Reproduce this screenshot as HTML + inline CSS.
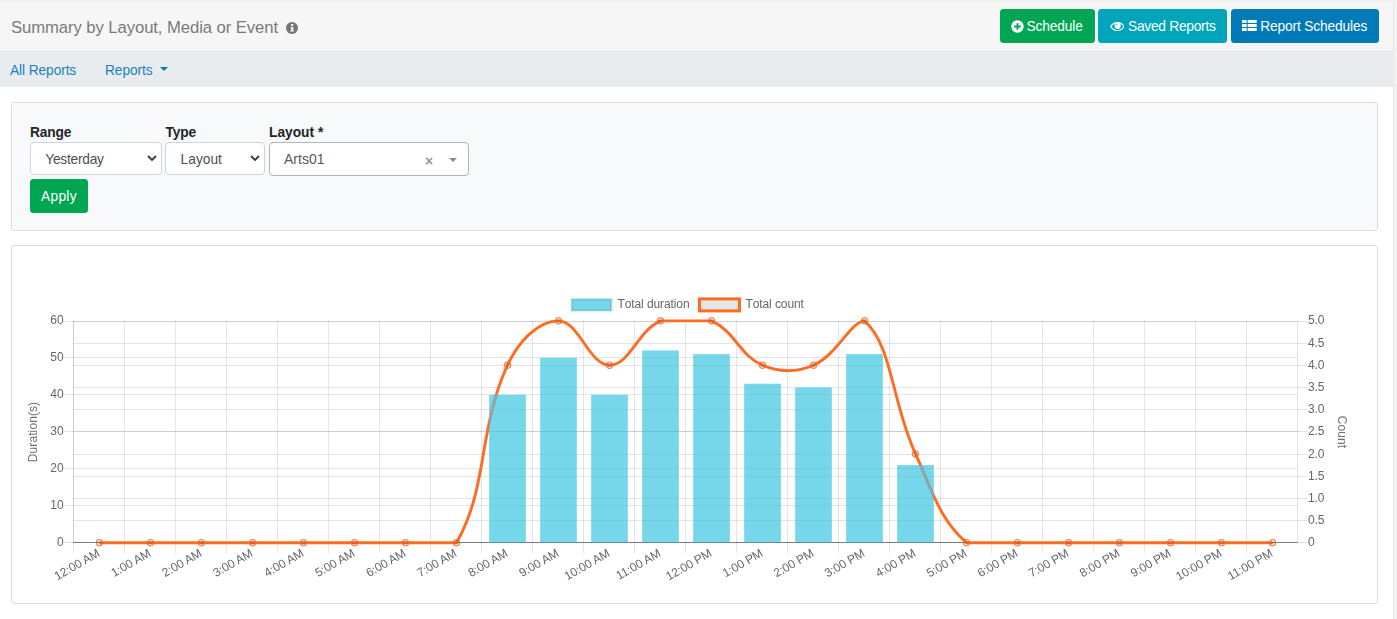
<!DOCTYPE html>
<html lang="en">
<head>
<meta charset="utf-8">
<title>Summary by Layout, Media or Event</title>
<style>
*{box-sizing:border-box}
html,body{margin:0;padding:0}
body{width:1397px;height:619px;overflow:hidden;position:relative;background:#fff;font-family:"Liberation Sans",Arial,sans-serif;font-size:13.75px;letter-spacing:-0.1px;color:#212529}
.abs{position:absolute}
.t{position:absolute;white-space:nowrap;line-height:1}
#page{position:absolute;left:0;top:0;width:1393px;height:619px;background:#fff;overflow:hidden}
#scroll{position:absolute;left:1393px;top:0;width:4px;height:619px;background:#f2f2f2;border-left:1px solid #eaeaea}
#scroll:before{content:"";position:absolute;left:-1px;top:0;width:4px;height:2px;background:#f2f2f2}
header{position:absolute;left:0;top:0;width:1393px;height:51px;background:#f6f6f6}
header:before{content:"";position:absolute;left:0;top:0;width:100%;height:1px;background:#ebebeb;border-top:1px solid #f3f3f3}
h1{margin:0;font-weight:400;font-size:16.7px;color:#7a7a7a;left:11px;top:20px;letter-spacing:-0.09px}
nav{position:absolute;left:0;top:51px;width:1393px;height:36px;background:#e9ecef;border-top:1px solid #e6e7e8}
nav a{color:#1a82bd;text-decoration:none;top:12px}
.caret{position:absolute;width:0;height:0;border-left:4px solid transparent;border-right:4px solid transparent;border-top:4.5px solid #0b7ab8}
.btn{position:absolute;height:34px;border-radius:3.5px;color:#fff;border:0;padding:0;margin:0;font:inherit;letter-spacing:inherit;text-align:left}
.btn .t{top:11px}
.btn svg{position:absolute}
.card{position:absolute;left:11px;width:1367px;border:1px solid #dcdddd;border-radius:3px}
label{font-weight:700;color:#212529;top:23px;letter-spacing:-0.15px}
.sel{position:absolute;top:39px;height:33px;background:#fff;border:1px solid #ced4da;border-radius:4px;color:#495057}
.sel .t{top:10px}
.sel svg{position:absolute;top:12px}
svg.chart{position:absolute;left:0;top:0;will-change:transform}
</style>
</head>
<body>
<div id="page">
<header>
  <h1 class="t">Summary by Layout, Media or Event</h1>
  <svg class="abs" style="left:286px;top:21.500px" width="12" height="12" viewBox="0 0 12 12"><circle cx="6" cy="6" r="6" fill="#757575"/><path d="M4.400 4.900h2.900v3.500h0.800v1.200H4.200V8.400h0.900V6.100H4.400zM5 2.100h2.200v1.800H5z" fill="#f6f6f6"/></svg>
  <a class="btn" style="left:1000px;top:9px;width:95px;background:#00a651">
    <svg style="left:11px;top:10.500px" width="13" height="13" viewBox="0 0 13 13"><circle cx="6.450" cy="6.500" r="6.200" fill="#fff"/><path d="M6.450 3.200v6.600M3.100 6.500h6.700" stroke="#00a651" stroke-width="1.900"/></svg>
    <span class="t" style="left:26.600px;letter-spacing:-0.15px">Schedule</span></a>
  <a class="btn" style="left:1098px;top:9px;width:129px;background:#00a5bb">
    <svg style="left:11.600px;top:12.800px" width="14.900" height="9.200" viewBox="0 0 15.300 9.400" preserveAspectRatio="none"><path d="M0.700 4.700C2.600 1.900 5 0.700 7.650 0.700S12.700 1.900 14.600 4.700C12.700 7.500 10.300 8.700 7.650 8.700S2.600 7.500 0.700 4.700z" fill="none" stroke="#fff" stroke-width="1.150"/><circle cx="7.800" cy="3.900" r="3.200" fill="#fff"/><path d="M5.900 3.900A1.900 1.900 0 0 1 7.800 2" stroke="#00a5bb" stroke-width="0.700" fill="none"/></svg>
    <span class="t" style="left:30px;letter-spacing:-0.26px">Saved Reports</span></a>
  <a class="btn" style="left:1231px;top:9px;width:148px;background:#007bb8">
    <svg style="left:11.300px;top:11px" width="15" height="12" viewBox="0 0 15 12"><path d="M0 0h4.700v3H0zM5.700 0h9v3h-9zM0 4h4.700v3H0zM5.700 4h9v3h-9zM0 8h4.700v3H0zM5.700 8h9v3h-9z" fill="#fff"/></svg>
    <span class="t" style="left:29.200px;letter-spacing:-0.14px">Report Schedules</span></a>
</header>
<nav>
  <a class="t" style="left:10px">All Reports</a>
  <a class="t" style="left:105px">Reports</a>
  <span class="caret" style="left:160px;top:15px"></span>
</nav>
<main>
  <section class="card" id="filter" style="top:102px;height:129px;background:#f8f9fa">
    <form onsubmit="return false">
      <label class="t" style="left:18px">Range</label>
      <label class="t" style="left:153.500px">Type</label>
      <label class="t" style="left:257px;letter-spacing:0">Layout *</label>
      <div class="sel" role="combobox" style="left:18px;width:132px"><span class="t" style="left:14.300px;letter-spacing:-0.25px">Yesterday</span>
        <svg style="left:116px" width="10" height="7" viewBox="0 0 10 7"><path d="M1 1l4 4 4-4" stroke="#343a40" stroke-width="1.800" fill="none"/></svg></div>
      <div class="sel" role="combobox" style="left:153px;width:100px"><span class="t" style="left:14.600px;letter-spacing:0px">Layout</span>
        <svg style="left:84px" width="10" height="7" viewBox="0 0 10 7"><path d="M1 1l4 4 4-4" stroke="#343a40" stroke-width="1.800" fill="none"/></svg></div>
      <div class="sel s2" role="combobox" style="left:257px;width:200px;height:34px;border-color:#b4b4b4;color:#5a5a5a"><span class="t" style="left:14px;top:9px;font-size:14px;letter-spacing:0">Arts01</span>
        <span class="t" style="left:155px;top:10.500px;color:#999;font-size:14px;font-weight:700;letter-spacing:0">×</span>
        <span class="caret" style="left:179px;top:14.500px;border-top-color:#888"></span></div>
      <button type="submit" class="btn" style="left:18px;top:76px;width:58px;background:#00a651"><span class="t" style="left:11px;letter-spacing:0.3px">Apply</span></button>
    </form>
  </section>
  <section class="card" id="chart" style="top:245px;height:359px;background:#fff">
    <svg class="chart" width="1365" height="357" viewBox="12 246 1365 357" font-family="'Liberation Sans', Arial, sans-serif" font-size="12" fill="#666" style="font-kerning:none">
<path d="M73.5 321.0V553.0M124.5 321.0V553.0M175.5 321.0V553.0M226.5 321.0V553.0M277.5 321.0V553.0M328.5 321.0V553.0M379.5 321.0V553.0M430.5 321.0V553.0M481.5 321.0V553.0M532.5 321.0V553.0M583.5 321.0V553.0M634.5 321.0V553.0M685.5 321.0V553.0M736.5 321.0V553.0M787.5 321.0V553.0M838.5 321.0V553.0M889.5 321.0V553.0M940.5 321.0V553.0M991.5 321.0V553.0M1042.5 321.0V553.0M1093.5 321.0V553.0M1144.5 321.0V553.0M1195.5 321.0V553.0M1246.5 321.0V553.0M1297.5 321.0V543.0" stroke="#000" stroke-opacity="0.1" fill="none" />
<path d="M63.5 505.5H1297.5M63.5 468.5H1297.5M63.5 431.5H1297.5M63.5 394.5H1297.5M63.5 357.5H1297.5M63.5 321.5H1297.5" stroke="#000" stroke-opacity="0.1" fill="none" />
<path d="M73.5 520.5H1307.5M73.5 498.5H1307.5M73.5 476.5H1307.5M73.5 454.5H1307.5M73.5 431.5H1307.5M73.5 409.5H1307.5M73.5 387.5H1307.5M73.5 365.5H1307.5M73.5 343.5H1307.5M73.5 321.5H1307.5" stroke="#000" stroke-opacity="0.1" fill="none" />
<path d="M73.5 321.0V543.0" stroke="#000" stroke-opacity="0.1" fill="none" />
<path d="M63.5 542.5H1307.5" stroke="#000" stroke-opacity="0.12" fill="none" />
<path d="M73.5 542.5H1297.5" stroke="#000" stroke-opacity="0.45" fill="none" />
<path d="M99.50 542.70L150.50 542.70L201.50 542.70L252.50 542.70L303.50 542.70L354.50 542.70L405.50 542.70L456.50 542.70C488.47 487.07 477.63 430.18 507.50 365.22C518.43 341.44 538.10 320.85 558.50 320.85C578.90 320.85 589.10 365.22 609.50 365.22C629.90 365.22 637.24 330.97 660.50 320.85L711.50 320.85C734.76 330.97 739.24 355.10 762.50 365.22C780.04 372.85 795.96 372.85 813.50 365.22C836.76 355.10 851.38 320.85 864.50 320.85C892.18 344.93 891.75 402.31 915.50 453.96C932.55 491.05 939.27 519.01 966.50 542.70L1017.50 542.70L1068.50 542.70L1119.50 542.70L1170.50 542.70L1221.50 542.70L1272.50 542.70" stroke="#ff6b22" stroke-width="2.9" fill="none" stroke-linejoin="round"/>
<circle cx="99.50" cy="542.70" r="3.3" fill="#000" fill-opacity="0.1" stroke="#ff6b22" stroke-width="1"/>
<circle cx="150.50" cy="542.70" r="3.3" fill="#000" fill-opacity="0.1" stroke="#ff6b22" stroke-width="1"/>
<circle cx="201.50" cy="542.70" r="3.3" fill="#000" fill-opacity="0.1" stroke="#ff6b22" stroke-width="1"/>
<circle cx="252.50" cy="542.70" r="3.3" fill="#000" fill-opacity="0.1" stroke="#ff6b22" stroke-width="1"/>
<circle cx="303.50" cy="542.70" r="3.3" fill="#000" fill-opacity="0.1" stroke="#ff6b22" stroke-width="1"/>
<circle cx="354.50" cy="542.70" r="3.3" fill="#000" fill-opacity="0.1" stroke="#ff6b22" stroke-width="1"/>
<circle cx="405.50" cy="542.70" r="3.3" fill="#000" fill-opacity="0.1" stroke="#ff6b22" stroke-width="1"/>
<circle cx="456.50" cy="542.70" r="3.3" fill="#000" fill-opacity="0.1" stroke="#ff6b22" stroke-width="1"/>
<circle cx="507.50" cy="365.22" r="3.3" fill="#000" fill-opacity="0.1" stroke="#ff6b22" stroke-width="1"/>
<circle cx="558.50" cy="320.85" r="3.3" fill="#000" fill-opacity="0.1" stroke="#ff6b22" stroke-width="1"/>
<circle cx="609.50" cy="365.22" r="3.3" fill="#000" fill-opacity="0.1" stroke="#ff6b22" stroke-width="1"/>
<circle cx="660.50" cy="320.85" r="3.3" fill="#000" fill-opacity="0.1" stroke="#ff6b22" stroke-width="1"/>
<circle cx="711.50" cy="320.85" r="3.3" fill="#000" fill-opacity="0.1" stroke="#ff6b22" stroke-width="1"/>
<circle cx="762.50" cy="365.22" r="3.3" fill="#000" fill-opacity="0.1" stroke="#ff6b22" stroke-width="1"/>
<circle cx="813.50" cy="365.22" r="3.3" fill="#000" fill-opacity="0.1" stroke="#ff6b22" stroke-width="1"/>
<circle cx="864.50" cy="320.85" r="3.3" fill="#000" fill-opacity="0.1" stroke="#ff6b22" stroke-width="1"/>
<circle cx="915.50" cy="453.96" r="3.3" fill="#000" fill-opacity="0.1" stroke="#ff6b22" stroke-width="1"/>
<circle cx="966.50" cy="542.70" r="3.3" fill="#000" fill-opacity="0.1" stroke="#ff6b22" stroke-width="1"/>
<circle cx="1017.50" cy="542.70" r="3.3" fill="#000" fill-opacity="0.1" stroke="#ff6b22" stroke-width="1"/>
<circle cx="1068.50" cy="542.70" r="3.3" fill="#000" fill-opacity="0.1" stroke="#ff6b22" stroke-width="1"/>
<circle cx="1119.50" cy="542.70" r="3.3" fill="#000" fill-opacity="0.1" stroke="#ff6b22" stroke-width="1"/>
<circle cx="1170.50" cy="542.70" r="3.3" fill="#000" fill-opacity="0.1" stroke="#ff6b22" stroke-width="1"/>
<circle cx="1221.50" cy="542.70" r="3.3" fill="#000" fill-opacity="0.1" stroke="#ff6b22" stroke-width="1"/>
<circle cx="1272.50" cy="542.70" r="3.3" fill="#000" fill-opacity="0.1" stroke="#ff6b22" stroke-width="1"/>
<clipPath id="barclip"><rect x="489.14" y="394.80" width="36.72" height="147.70"/><rect x="540.14" y="357.83" width="36.72" height="184.67"/><rect x="591.14" y="394.80" width="36.72" height="147.70"/><rect x="642.14" y="350.43" width="36.72" height="192.07"/><rect x="693.14" y="354.13" width="36.72" height="188.37"/><rect x="744.14" y="383.71" width="36.72" height="158.79"/><rect x="795.14" y="387.41" width="36.72" height="155.09"/><rect x="846.14" y="354.13" width="36.72" height="188.37"/><rect x="897.14" y="465.05" width="36.72" height="77.45"/></clipPath>
<g fill="#26bfdf" fill-opacity="0.63"><rect x="489.14" y="394.80" width="36.72" height="147.70"/><rect x="540.14" y="357.83" width="36.72" height="184.67"/><rect x="591.14" y="394.80" width="36.72" height="147.70"/><rect x="642.14" y="350.43" width="36.72" height="192.07"/><rect x="693.14" y="354.13" width="36.72" height="188.37"/><rect x="744.14" y="383.71" width="36.72" height="158.79"/><rect x="795.14" y="387.41" width="36.72" height="155.09"/><rect x="846.14" y="354.13" width="36.72" height="188.37"/><rect x="897.14" y="465.05" width="36.72" height="77.45"/></g>
<g clip-path="url(#barclip)"><path d="M99.50 542.70L150.50 542.70L201.50 542.70L252.50 542.70L303.50 542.70L354.50 542.70L405.50 542.70L456.50 542.70C488.47 487.07 477.63 430.18 507.50 365.22C518.43 341.44 538.10 320.85 558.50 320.85C578.90 320.85 589.10 365.22 609.50 365.22C629.90 365.22 637.24 330.97 660.50 320.85L711.50 320.85C734.76 330.97 739.24 355.10 762.50 365.22C780.04 372.85 795.96 372.85 813.50 365.22C836.76 355.10 851.38 320.85 864.50 320.85C892.18 344.93 891.75 402.31 915.50 453.96C932.55 491.05 939.27 519.01 966.50 542.70L1017.50 542.70L1068.50 542.70L1119.50 542.70L1170.50 542.70L1221.50 542.70L1272.50 542.70" stroke="#97a2a7" stroke-width="2.9" fill="none"/></g>
<text x="63.5" y="546.2" text-anchor="end">0</text>
<text x="63.5" y="509.2" text-anchor="end">10</text>
<text x="63.5" y="472.3" text-anchor="end">20</text>
<text x="63.5" y="435.3" text-anchor="end">30</text>
<text x="63.5" y="398.3" text-anchor="end">40</text>
<text x="63.5" y="361.3" text-anchor="end">50</text>
<text x="63.5" y="324.4" text-anchor="end">60</text>
<text x="1308.0" y="546.2">0</text>
<text x="1308.0" y="524.0">0.5</text>
<text x="1308.0" y="501.8">1.0</text>
<text x="1308.0" y="479.6">1.5</text>
<text x="1308.0" y="457.5">2.0</text>
<text x="1308.0" y="435.3">2.5</text>
<text x="1308.0" y="413.1">3.0</text>
<text x="1308.0" y="390.9">3.5</text>
<text x="1308.0" y="368.7">4.0</text>
<text x="1308.0" y="346.5">4.5</text>
<text x="1308.0" y="324.4">5.0</text>
<text transform="translate(98.55 552.10) rotate(-30)" x="0" y="4" text-anchor="end" style="font-kerning:normal">12:00 AM</text>
<text transform="translate(149.55 552.10) rotate(-30)" x="0" y="4" text-anchor="end" style="font-kerning:normal">1:00 AM</text>
<text transform="translate(200.55 552.10) rotate(-30)" x="0" y="4" text-anchor="end" style="font-kerning:normal">2:00 AM</text>
<text transform="translate(251.55 552.10) rotate(-30)" x="0" y="4" text-anchor="end" style="font-kerning:normal">3:00 AM</text>
<text transform="translate(302.55 552.10) rotate(-30)" x="0" y="4" text-anchor="end" style="font-kerning:normal">4:00 AM</text>
<text transform="translate(353.55 552.10) rotate(-30)" x="0" y="4" text-anchor="end" style="font-kerning:normal">5:00 AM</text>
<text transform="translate(404.55 552.10) rotate(-30)" x="0" y="4" text-anchor="end" style="font-kerning:normal">6:00 AM</text>
<text transform="translate(455.55 552.10) rotate(-30)" x="0" y="4" text-anchor="end" style="font-kerning:normal">7:00 AM</text>
<text transform="translate(506.55 552.10) rotate(-30)" x="0" y="4" text-anchor="end" style="font-kerning:normal">8:00 AM</text>
<text transform="translate(557.55 552.10) rotate(-30)" x="0" y="4" text-anchor="end" style="font-kerning:normal">9:00 AM</text>
<text transform="translate(608.55 552.10) rotate(-30)" x="0" y="4" text-anchor="end" style="font-kerning:normal">10:00 AM</text>
<text transform="translate(659.55 552.10) rotate(-30)" x="0" y="4" text-anchor="end" style="font-kerning:normal">11:00 AM</text>
<text transform="translate(710.55 552.10) rotate(-30)" x="0" y="4" text-anchor="end" style="font-kerning:normal">12:00 PM</text>
<text transform="translate(761.55 552.10) rotate(-30)" x="0" y="4" text-anchor="end" style="font-kerning:normal">1:00 PM</text>
<text transform="translate(812.55 552.10) rotate(-30)" x="0" y="4" text-anchor="end" style="font-kerning:normal">2:00 PM</text>
<text transform="translate(863.55 552.10) rotate(-30)" x="0" y="4" text-anchor="end" style="font-kerning:normal">3:00 PM</text>
<text transform="translate(914.55 552.10) rotate(-30)" x="0" y="4" text-anchor="end" style="font-kerning:normal">4:00 PM</text>
<text transform="translate(965.55 552.10) rotate(-30)" x="0" y="4" text-anchor="end" style="font-kerning:normal">5:00 PM</text>
<text transform="translate(1016.55 552.10) rotate(-30)" x="0" y="4" text-anchor="end" style="font-kerning:normal">6:00 PM</text>
<text transform="translate(1067.55 552.10) rotate(-30)" x="0" y="4" text-anchor="end" style="font-kerning:normal">7:00 PM</text>
<text transform="translate(1118.55 552.10) rotate(-30)" x="0" y="4" text-anchor="end" style="font-kerning:normal">8:00 PM</text>
<text transform="translate(1169.55 552.10) rotate(-30)" x="0" y="4" text-anchor="end" style="font-kerning:normal">9:00 PM</text>
<text transform="translate(1220.55 552.10) rotate(-30)" x="0" y="4" text-anchor="end" style="font-kerning:normal">10:00 PM</text>
<text transform="translate(1271.55 552.10) rotate(-30)" x="0" y="4" text-anchor="end" style="font-kerning:normal">11:00 PM</text>
<text transform="translate(37.2 432.0) rotate(-90)" text-anchor="middle" letter-spacing="0.09" fill="#707070">Duration(s)</text>
<text transform="translate(1338.3 432.0) rotate(90)" text-anchor="middle" letter-spacing="0.09" fill="#707070">Count</text>
<rect x="571.5" y="298.9" width="40" height="12" fill="#75d5e9" stroke="#000" stroke-opacity="0.08" stroke-width="3"/>
<text x="617.5" y="308">Total duration</text>
<rect x="699.5" y="298.9" width="40" height="12" fill="#e5e5e5" stroke="#ff6b22" stroke-width="3"/>
<text x="745.5" y="308">Total count</text>
</svg>
  </section>
</main>
</div>
<div id="scroll"></div>
</body>
</html>
